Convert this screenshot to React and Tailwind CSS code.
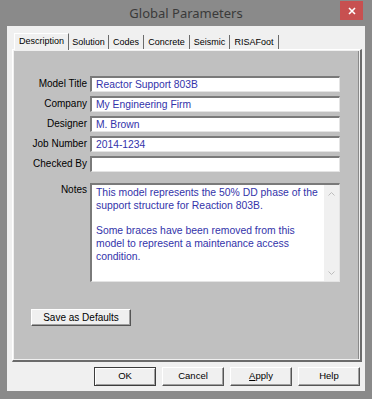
import React from 'react';

const tabs = [
  { name: 'Description', w: 'w-[55px]' },
  { name: 'Solution', w: 'w-[40px]' },
  { name: 'Codes', w: 'w-[35px]' },
  { name: 'Concrete', w: 'w-[46px]' },
  { name: 'Seismic', w: 'w-[40px]' },
  { name: 'RISAFoot', w: 'w-[49px]' }
];

const fields = [
  { label: 'Model Title', value: 'Reactor Support 803B' },
  { label: 'Company', value: 'My Engineering Firm' },
  { label: 'Designer', value: 'M. Brown' },
  { label: 'Job Number', value: '2014-1234' },
  { label: 'Checked By', value: '' }
];

const notes = [
  'This model represents the 50% DD phase of the',
  'support structure for Reaction 803B.',
  '\u00a0',
  'Some braces have been removed from this',
  'model to represent a maintenance access',
  'condition.'
];

const Chevron = ({ down }) => (
  <svg width="7" height="4" viewBox="0 0 7 4" className="block">
    <path d={down ? 'M0.5 0.5 L3.5 3.5 L6.5 0.5' : 'M0.5 3.5 L3.5 0.5 L6.5 3.5'} fill="none" stroke="#bdbdbd" strokeWidth="1" />
  </svg>
);

const DlgButton = ({ children, isDefault }) => (
  <div
    className={
      isDefault
        ? 'w-[62px] h-[19px] bg-[#f0f0f0] border border-[#3c3c3c] flex items-center justify-center text-[9.5px] text-black shadow-[inset_1px_1px_0_#ffffff,inset_-1px_-1px_0_#a0a0a0]'
        : 'w-[62px] h-[19px] bg-[#f0f0f0] border-t border-l border-t-white border-l-white border-r border-b border-r-[#555] border-b-[#555] flex items-center justify-center text-[9.5px] text-black shadow-[inset_-1px_-1px_0_#a0a0a0]'
    }
  >
    {children}
  </div>
);

const App = () => {
  return (
    <div className="w-[372px] h-[399px] bg-[#8a8a8a] flex flex-col font-['Liberation_Sans',Arial,sans-serif]">
      <div className="h-[26px] relative flex items-center justify-center shrink-0">
        <span className="font-['Noto_Sans',sans-serif] text-[13px] text-[#3a3a3a] pt-[1px]">Global Parameters</span>
        <div className="absolute right-[9px] top-[1px] w-[23px] h-[19px] bg-[#c75050] flex items-center justify-center">
          <svg width="8" height="8" viewBox="0 0 8 8">
            <path d="M1 1 L7 7 M7 1 L1 7" stroke="#ffffff" strokeWidth="1.6" />
          </svg>
        </div>
      </div>

      <div className="mx-[7px] mb-[8px] flex-1 bg-[#f0f0f0] flex flex-col pl-[5px] pr-[3px] pt-[7px]">
        {/* tabs */}
        <div className="h-[16px] flex items-end pl-[2px]">
          {tabs.map((t, i) =>
            i === 0 ? (
              <div
                key={t.name}
                className={`${t.w} h-[17px] -mb-[1px] relative z-10 bg-[#f0f0f0] border-t border-l border-white border-r border-r-[#6b6b6b] text-[9px] text-black flex items-start justify-center pt-[2px] leading-[11px]`}
              >
                {t.name}
              </div>
            ) : (
              <div
                key={t.name}
                className={`${t.w} h-[14px] border-r border-r-[#6b6b6b] text-[9px] text-black flex items-start justify-center pt-[2px] leading-[11px]`}
              >
                {t.name}
              </div>
            )
          )}
        </div>

        {/* tab body */}
        <div className="h-[313px] border-t border-l border-white border-r-2 border-b-2 border-r-[#6b6b6b] border-b-[#6b6b6b] p-[1px] flex">
          <div className="flex-1 bg-[#c0c0c0] border-r border-r-[#8a8a8a] flex flex-col pt-[25px]">
            <div className="flex flex-col gap-[4px]">
              {fields.map((f) => (
                <div key={f.label} className="flex items-center h-[16px]">
                  <div className="w-[73px] text-right text-[10px] text-black leading-[16px]">{f.label}</div>
                  <div className="ml-[3px] w-[250px] h-[16px] bg-white border-t-2 border-l-2 border-t-[#7a7a7a] border-l-[#7a7a7a] border-r border-b border-r-[#e4e4e4] border-b-[#e4e4e4] pl-[4px] text-[10.3px] leading-[13px] text-[#3333aa]">
                    {f.value}
                  </div>
                </div>
              ))}
            </div>

            <div className="flex mt-[11px]">
              <div className="w-[73px] text-right text-[10px] text-black leading-[12px] pt-[1px]">Notes</div>
              <div className="ml-[3px] w-[250px] h-[99px] bg-white border-t-2 border-l-2 border-t-[#7a7a7a] border-l-[#7a7a7a] border-r border-b border-r-[#e4e4e4] border-b-[#e4e4e4] flex">
                <div className="flex-1 pl-[4px] pt-[2px] text-[10.4px] leading-[12.7px] text-[#3333aa]">
                  {notes.map((line, i) => (
                    <div key={i} className="whitespace-nowrap">{line}</div>
                  ))}
                </div>
                <div className="w-[15px] bg-[#f0f0f0] flex flex-col items-center justify-between pt-[7px] pb-[6px]">
                  <Chevron />
                  <Chevron down />
                </div>
              </div>
            </div>

            <div className="mt-[27px] ml-[17px] w-[100px] h-[17px] bg-[#f0f0f0] border-t border-l border-white border-r border-b border-r-[#555] border-b-[#555] shadow-[inset_-1px_-1px_0_#a0a0a0] flex items-center justify-center text-[10px] text-black">
              Save as Defaults
            </div>
          </div>
        </div>

        {/* dialog buttons */}
        <div className="flex justify-end gap-[6px] mt-[5px] pr-[2px]">
          <DlgButton isDefault>OK</DlgButton>
          <DlgButton>Cancel</DlgButton>
          <DlgButton>
            <span><span className="underline">A</span>pply</span>
          </DlgButton>
          <DlgButton>Help</DlgButton>
        </div>
      </div>
    </div>
  );
};

export default App;
